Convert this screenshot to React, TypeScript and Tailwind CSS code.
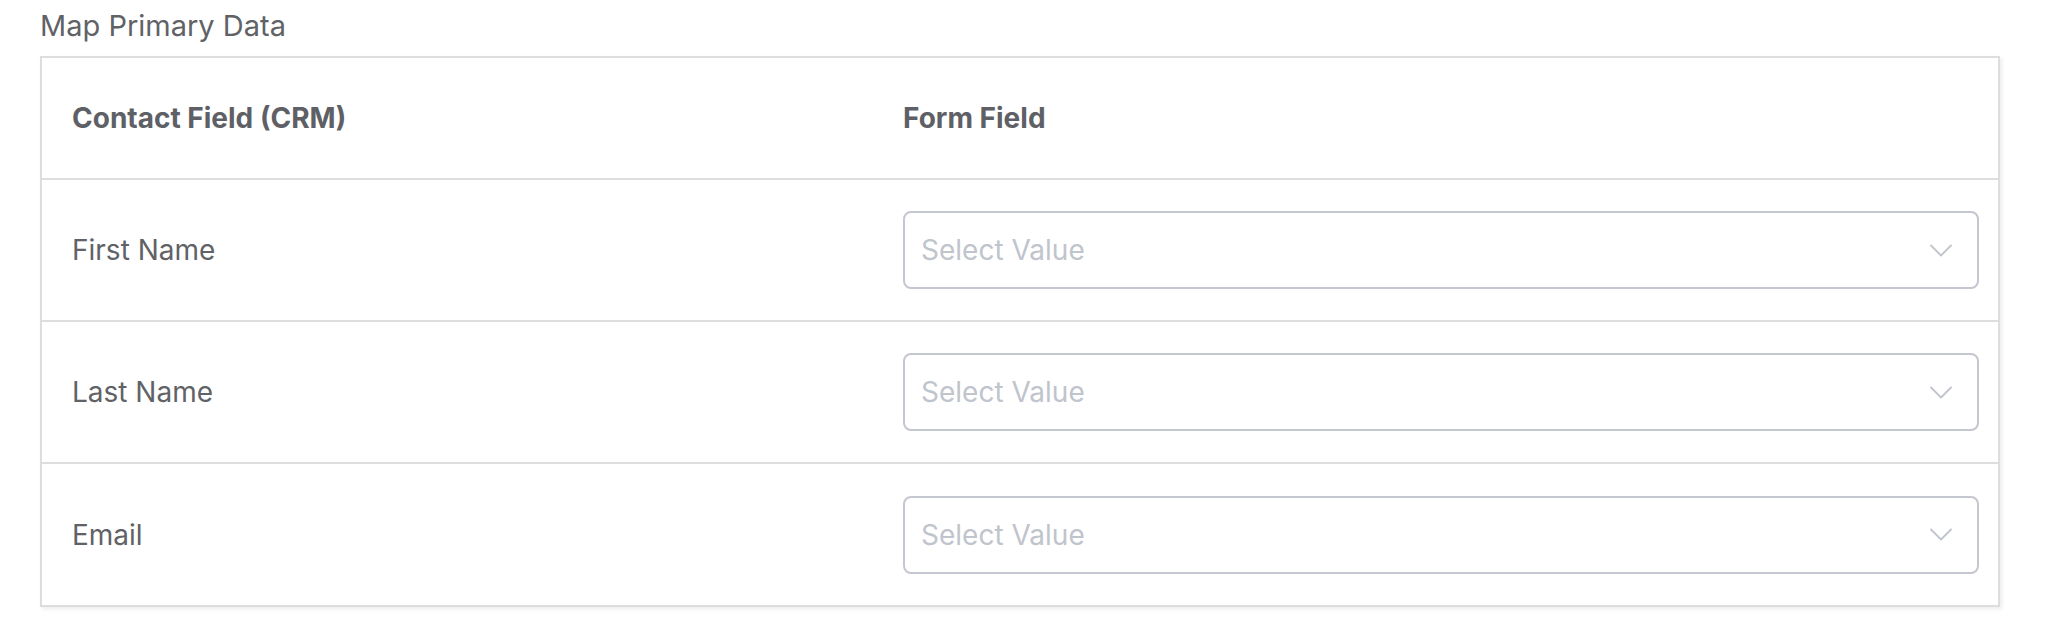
const rows = ["First Name", "Last Name", "Email"];

function Chevron() {
  return (
    <svg width="22" height="13" viewBox="0 0 22 13" fill="none" className="shrink-0">
      <path d="M1 1.5 L11 11.5 L21 1.5" stroke="#c0c4cc" strokeWidth="1.8" strokeLinecap="round" strokeLinejoin="round" />
    </svg>
  );
}

function SelectBox() {
  return (
    <div className="flex h-[78px] w-full items-center justify-between rounded-[8px] border-2 border-[#c4c7cf] bg-white pl-[16px] pr-[25px]">
      <span className="text-[28px] text-[#c0c4cc]">Select Value</span>
      <Chevron />
    </div>
  );
}

export default function App() {
  return (
    <div
      className="min-h-[626px] w-[2046px] bg-white pl-[40px] pt-[8px]"
      style={{ fontFamily: "Inter, 'Noto Sans', 'Liberation Sans', sans-serif" }}
    >
      <div className="text-[29px] leading-[36px] text-[#606266]">Map Primary Data</div>

      <div className="mt-[12px] w-[1960px] border-2 border-[#dddddd] bg-white shadow-[2px_2px_4px_rgba(0,0,0,0.08)]">
        <div className="grid h-[122px] grid-cols-[831px_1fr] items-center border-b-2 border-[#dddddd]">
          <div className="pl-[30px] text-[28px] font-bold text-[#5e6066]">Contact Field (CRM)</div>
          <div className="pl-[30px] text-[28px] font-bold text-[#5e6066]">Form Field</div>
        </div>

        {rows.map((label, i) => (
          <div
            key={label}
            className={`grid grid-cols-[831px_1fr] items-center ${
              i < rows.length - 1 ? "h-[142px] border-b-2 border-[#dddddd]" : "h-[141px]"
            }`}
          >
            <div className="pl-[30px] text-[28px] text-[#606266]">{label}</div>
            <div className="pl-[30px] pr-[19px]">
              <SelectBox />
            </div>
          </div>
        ))}
      </div>
    </div>
  );
}
